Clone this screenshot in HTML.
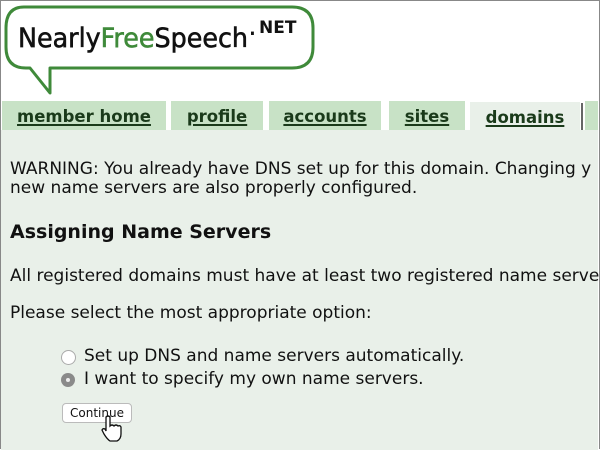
<!DOCTYPE html>
<html><head><meta charset="utf-8"><style>
body{margin:0;width:600px;height:450px;overflow:hidden;background:#fff;font-family:"DejaVu Sans","Liberation Sans",sans-serif;position:relative}
.frame{position:absolute;left:0;top:0;width:598px;height:448px;border:1px solid #888;border-bottom:none;pointer-events:none}
.content{position:absolute;left:1px;top:130px;width:597px;height:320px;background:#e9f0e9}
.tab{position:absolute;top:101px;height:29px;background:#c8e2c6;font-weight:bold;font-size:16.5px;color:#1a3a1a;text-align:center;line-height:31px}
.tab span{text-decoration:underline;text-decoration-thickness:2px;text-underline-offset:2px}
.t{position:absolute;left:10px;font-size:17px;color:#111;white-space:nowrap}
</style></head><body>
<svg style="position:absolute;left:0;top:0" width="330" height="100">
<path d="M24 7 H292 Q313 7 313 28 V47 Q313 68 292 68 H50 V93 L30 68 H26 Q6 68 6 47 V28 Q6 7 24 7 Z" fill="#fff" stroke="#3f8a3a" stroke-width="3" stroke-linejoin="round"/>
<text x="18" y="47" font-family="DejaVu Sans" font-size="27" fill="#111" stroke="#111" stroke-width="0.6" textLength="230" lengthAdjust="spacingAndGlyphs">Nearly<tspan fill="#3f8a3a" stroke="#3f8a3a">Free</tspan>Speech</text>
<text x="248" y="43" font-size="28" fill="#111">·</text>
<text x="259" y="33" font-family="DejaVu Sans" font-size="17" font-weight="bold" fill="#111">NET</text>
</svg>
<div class="tab" style="left:2px;width:164px"><span>member home</span></div>
<div class="tab" style="left:171px;width:92px"><span>profile</span></div>
<div class="tab" style="left:269px;width:112px"><span>accounts</span></div>
<div class="tab" style="left:389px;width:76px"><span>sites</span></div>
<div class="tab" style="left:470px;width:110px;background:#e9f0e9;top:102px;height:30px"><span>domains</span></div>
<div style="position:absolute;left:581px;top:103px;width:2px;height:28px;background:#666"></div>
<div class="tab" style="left:585px;width:13px"></div>
<div class="content"></div>
<div class="t" style="top:159px">WARNING: You already have DNS set up for this domain. Changing y</div>
<div class="t" style="top:178px">new name servers are also properly configured.</div>
<div class="t" style="top:221px;font-weight:bold;font-size:19px">Assigning Name Servers</div>
<div class="t" style="top:266px">All registered domains must have at least two registered name serve</div>
<div class="t" style="top:303px">Please select the most appropriate option:</div>
<div style="position:absolute;left:61px;top:350px;width:13px;height:13px;border-radius:50%;background:#fff;border:1px solid #aaa"></div>
<div style="position:absolute;left:61px;top:373px;width:14px;height:14px;border-radius:50%;background:#8a8a8a"><div style="position:absolute;left:5px;top:5px;width:4px;height:4px;border-radius:50%;background:#eee"></div></div>
<div class="t" style="left:84px;top:346px">Set up DNS and name servers automatically.</div>
<div class="t" style="left:84px;top:369px">I want to specify my own name servers.</div>
<div style="position:absolute;left:62px;top:403px;width:68px;height:18px;background:#fff;border:1px solid #bbb;border-radius:4px;font-size:12px;line-height:18px;text-align:center;color:#111">Continue</div>
<svg style="position:absolute;left:100px;top:415px" width="24" height="28"><path d="M6 2 Q8 0 10 2 V11 Q12 9 14 11 Q16 9 18 11 Q20 10 21 12 V19 Q21 24 17 26 H10 Q7 24 4 19 L2 15 Q3 13 5 14 L6 16 Z" fill="#fff" stroke="#111" stroke-width="1.3"/></svg>
<div class="frame"></div>
</body></html>
